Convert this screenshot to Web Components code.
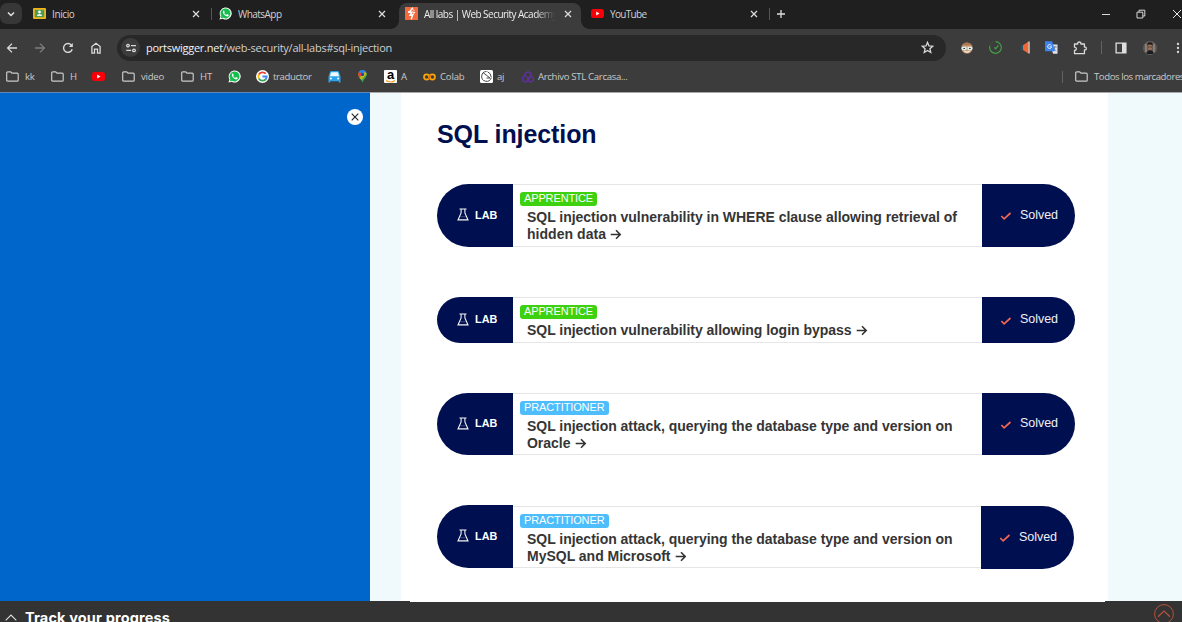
<!DOCTYPE html>
<html lang="es">
<head>
<meta charset="utf-8">
<title>All labs | Web Security Academy</title>
<style>
html,body{margin:0;height:100%;overflow:hidden;background:#fff;font-family:"Open Sans","Noto Sans",sans-serif}
</style>
</head>
<body>
<browser-window></browser-window>
<script>
const ICONS = {
 chevron:['0 0 12 12','<path d="M3 4.5l3 3 3-3" fill="none" stroke="#e4e4e4" stroke-width="1.5"/>'],
 close:['0 0 12 12','<path d="M3 3l6 6M9 3l-6 6" stroke="#dedede" stroke-width="1.2"/>'],
 plus:['0 0 12 12','<path d="M6 2v8M2 6h8" stroke="#dedede" stroke-width="1.3"/>'],
 classroom:['0 0 13 11','<rect width="13" height="11" rx="1" fill="#f0b51b"/><rect x="1.8" y="1.8" width="9.4" height="7.4" fill="#4d9a55"/><circle cx="6.5" cy="4" r="1.4" fill="#fff"/><path d="M3.8 8q0-2 2.700-2t2.700 2z" fill="#e8f4ea"/>'],
 whatsapp:['0 0 26 26','<path d="M1 25l1.8-6.500A12 12 0 1 1 7.400 23.300z" fill="#fff"/><path d="M3.400 22.600l1.200-4.400A10 10 0 1 1 8 21.500z" fill="#18bd4f"/><path d="M9.200 7.200c-1.500.8-2 2.500-1.200 4.500 1.300 3.200 3.700 5.700 7 6.900 2 .7 4 .2 4.500-2 .2-.8 0-1-.5-1.200l-2.400-1.100c-.5-.2-.8 0-1.100.4l-.9 1.100c-1.900-.6-3.400-2-4.300-3.700l1-1.400c.2-.4 0-.7-.1-1l-1-2.200c-.2-.4-.6-.4-1-.3z" fill="#fff"/>'],
 burp:['0 0 24 24','<path d="M0 0h24v24H0z" fill="#f26a3d"/><path d="M14.500 1.500L8 9.500h5L9.500 15H14l-2.500 7.500" fill="none" stroke="#fff" stroke-width="2.800"/><path d="M8 9.500L5.500 8M14 15l4-5h-3M14.500 5l3 2" fill="none" stroke="#fff" stroke-width="1.800"/>'],
 youtube:['0 0 13 9','<rect width="13" height="9" rx="2.300" fill="#f80008"/><path d="M5.200 2.600v3.800L8.500 4.500z" fill="#fff"/>'],
 back:['0 0 12 12','<path d="M11 6H1.700M6 1.600L1.600 6 6 10.400" fill="none" stroke="#dadada" stroke-width="1.300"/>'],
 forward:['0 0 12 12','<path d="M1 6h9.300M6 1.600L10.400 6 6 10.400" fill="none" stroke="#7e7e7e" stroke-width="1.300"/>'],
 reload:['0 0 12 12','<path d="M10.200 7.200A4.400 4.400 0 1 1 9.400 3.200" fill="none" stroke="#dadada" stroke-width="1.400"/><path d="M10.800.900v4H6.900z" fill="#dadada"/>'],
 home:['0 0 12 12','<path d="M1.900 4.500L6 1.300l4.100 3.200v6.600H7.500V7.200h-3v3.900H1.900z" fill="none" stroke="#dadada" stroke-width="1.300"/>'],
 tune:['0 0 12 12','<g fill="none" stroke="#d8d8d8" stroke-width="1.300"><circle cx="3" cy="3.600" r="1.300"/><path d="M6 3.600h5M1.200 8.400h5"/><circle cx="9" cy="8.400" r="1.300"/></g>'],
 star:['0 0 24 24','<path d="M12 2.500l2.700 6.500 7 .6-5.300 4.600 1.600 6.900-6-3.700-6 3.700 1.600-6.900L2.300 9.600l7-.6z" fill="none" stroke="#dadada" stroke-width="2.400"/>'],
 face:['0 0 12 12','<circle cx="6" cy="6" r="5.600" fill="#d2a27b"/><path d="M.8 5A5.300 5.300 0 0 1 11.200 5L9.500 3.500h-7z" fill="#a77752"/><rect x=".6" y="4.800" width="5" height="3.400" rx="1.400" fill="#d9eef0"/><rect x="6.400" y="4.800" width="5" height="3.400" rx="1.400" fill="#d9eef0"/><path d="M2.300 6.500h1.700M8 6.500h1.700" stroke="#344" stroke-width="1.100"/><path d="M3.500 9.500q2.500 1.500 5 0" stroke="#fff" fill="none"/>'],
 gauge:['0 0 13 13','<path d="M6.500.700A5.800 5.800 0 1 1 .9 5" fill="none" stroke="#43a047" stroke-width="1.200"/><path d="M1.200 4A6 6 0 0 1 4.500 1" fill="none" stroke="#37693a" stroke-dasharray="1.500 1"/><path d="M5.300 6.400l1.300 1.400 2.800-3.500" fill="none" stroke="#43a047" stroke-width="1.300"/>'],
 horn:['0 0 12 13','<path d="M1 4h3v5H1z" fill="#23536c"/><path d="M3 4.300L8.500.5v12L3 8.900z" fill="#f26835"/><path d="M9 .4v12.200" stroke="#f5d7ca" stroke-width="1.300"/>'],
 translate:['0 0 13 13','<path d="M5.500 3.500h7v9.300H8z" fill="#dfe3e9"/><path d="M7.800 6h4M9.800 5v1q0 2-2 4M8.300 7l3 3" stroke="#61789a" stroke-width=".8" fill="none"/><path d="M0 .3h7.200L10 10.200H0z" fill="#3d82ed"/><path d="M6.300 4.500a2 2 0 1 0 .3 1.400H4.500" fill="none" stroke="#fff" stroke-width=".9"/>'],
 puzzle:['0 0 14 14','<path d="M1.500 3h3.200q-.2-2 1.600-2t1.600 2h3.500v3q1.900-.1 1.900 1.500T11.400 9v3.700H1.500V9.500q1.900-.2 1.900-1.700T1.500 6.200z" fill="none" stroke="#dadada" stroke-width="1.300" stroke-linejoin="round"/>'],
 panel:['0 0 12 12','<path d="M1.100 1.100h9.800v9.800H1.100z" fill="none" stroke="#dedede" stroke-width="1.300"/><path d="M7 1h4v10H7z" fill="#dedede"/>'],
 avatar:['0 0 14 14','<circle cx="7" cy="7" r="7" fill="#615c58"/><path d="M3 3v8M11 3v8" stroke="#b4a697" stroke-width=".9"/><path d="M3.600 13l1-3 2.400-1 2.600 1 1 3z" fill="#191b1e"/><ellipse cx="7" cy="5.800" rx="2.300" ry="3.500" fill="#967058"/><path d="M4.500 5V2.500Q7 0 9.500 2.500V5L8.300 3.500H5.500z" fill="#19171a"/><path d="M5 6h1.500M7.500 6H9" stroke="#342823" stroke-width=".8"/>'],
 dots:['0 0 4 12','<g fill="#dedede"><circle cx="2" cy="2" r="1.150"/><circle cx="2" cy="6" r="1.150"/><circle cx="2" cy="10" r="1.150"/></g>'],
 folder:['0 0 13 11','<path d="M.7 9.200V1.800q0-1 1-1h3l1.300 1.400h5.200q1 0 1 1v6q0 1-1 1H1.700q-1 0-1-1z" fill="none" stroke="#c9c9c9" stroke-width="1.200"/>'],
 google:['0 0 26 26','<circle cx="13" cy="13" r="13" fill="#fff"/><g fill="none" stroke-width="3.600"><path d="M19.500 7.400A8.500 8.500 0 0 0 5.700 9" stroke="#ea4335"/><path d="M5.700 9a8.500 8.500 0 0 0 0 8" stroke="#fbbc05"/><path d="M5.700 17A8.500 8.500 0 0 0 19 19" stroke="#34a853"/><path d="M18.500 19.500A8.500 8.500 0 0 0 21.400 13H13" stroke="#4285f4"/></g>'],
 car:['0 0 13 12','<path d="M2.200.6Q2.400 0 3 0h7q.6 0 .8.600L12.500 5.500v6H10.800V10.300H2.200V11.500H.5v-6z" fill="#2aa3ee"/><path d="M3 1.200h7l1 4H2z" fill="#f2faff"/><circle cx="2.900" cy="7.600" r="1" fill="#fff"/><circle cx="10.100" cy="7.600" r="1" fill="#fff"/>'],
 maps:['0 0 9 13','<path d="M4.500 12.800C3.800 9.200.1 7.600.1 4.500A4.400 4.400 0 0 1 8.900 4.500c0 3.100-3.700 4.700-4.400 8.300z" fill="#34a853"/><path d="M.1 4.500Q.1 2.500 1.400 1.300L4.500 4.500 1.400 7.800Q.1 6 .1 4.500z" fill="#ea4335"/><path d="M1.300 1.400A4.400 4.400 0 0 1 8.400 2.500L4.500 4.500z" fill="#2f7de9"/><path d="M1.300 7.700L6.700 1.800 8.900 4 3.500 9.900z" fill="#fbbc04" opacity=".7"/><circle cx="4.500" cy="4.400" r="1.600" fill="#1c4b9c"/>'],
 colab:['0 0 13 8','<g fill="none" stroke="#f9a40a" stroke-width="1.700"><circle cx="3.600" cy="4" r="2.600"/><circle cx="9.400" cy="4" r="2.600"/></g><path d="M5.500 6L7.500 2" stroke="#e76b08" stroke-width="1.500"/>'],
 aj:['0 0 13 13','<rect width="13" height="13" rx="1.500" fill="#fff"/><path d="M6.500 1.500A4.900 4.900 0 1 0 11.200 8M3 2.500l7 5.500H6.500M7.500 1.700Q11 3 11.300 7.500" fill="none" stroke="#343434" stroke-width=".9"/>'],
 stl:['0 0 12 12','<g fill="none" stroke="#6230a6" stroke-width="1.300"><path d="M3 5.200V2.500L6 .8l3 1.700v3L6 7.200 4.500 6.300"/><path d="M4.800 5.500L2.500 4.700.7 6.500v3L3 11l3-1.500V7.200"/><path d="M8.800 5l2.500 1.500v3L9 11 6 9.500V8l2-1"/></g>'],
 flask:['0 0 12 13','<path d="M2.500 1h7M4.100 1v4L1 11.900h10L7.900 5V1" fill="none" stroke="#f5f5f5" stroke-width="1.100"/><path d="M3 8.700h6" stroke="#777f9e" stroke-width=".5"/>'],
 check:['0 0 12 10','<path d="M1.300 5l2.800 2.800L10.500 2" fill="none" stroke="#f16650" stroke-width="1.700"/>'],
 arrow:['0 0 12 11','<path d="M.7 5.500h9.300M6 1.300l4.200 4.200L6 9.700" fill="none" stroke="#333" stroke-width="1.600"/>'],
 shut:['0 0 16 16','<circle cx="8" cy="8" r="8" fill="#fff"/><path d="M4.700 4.700l6.600 6.600M11.300 4.700l-6.600 6.600" stroke="#222" stroke-width="1.100"/>'],
 up:['0 0 12 7','<path d="M.7 6.300L6 1l5.300 5.300" fill="none" stroke="#ddd" stroke-width="1.100"/>'],
 top:['0 0 20 20','<circle cx="10" cy="10" r="9.400" fill="none" stroke="#b8503e" stroke-width="1"/><path d="M4 12.800L10 7l6 5.800" fill="none" stroke="#b8503e" stroke-width="1.200"/>'],
 minimize:['0 0 10 10','<path d="M1 5.500h8" stroke="#d8d8d8" stroke-width="1"/>'],
 restore:['0 0 10 10','<path d="M1 3.200h5.800V9H1zM3 3V1.200h5.800V7H7" fill="none" stroke="#d8d8d8" stroke-width="1"/>'],
 exit:['0 0 10 10','<path d="M1 1l8 8M9 1l-8 8" stroke="#e8e8e8" stroke-width="1"/>']
};
function define(name, html, after){
 const t=document.createElement('template'); t.innerHTML=html;
 customElements.define(name, class extends HTMLElement{
  connectedCallback(){
   if(this.shadowRoot) return;
   this.attachShadow({mode:'open'}).append(t.content.cloneNode(true));
   if(after) after(this,this.shadowRoot);
  }
 });
}
define('ui-icon','<style>:host{display:block;flex:none;line-height:0}svg{display:block;width:100%;height:100%}</style>',(h,r)=>{
 const n=h.getAttribute('name'), i=ICONS[n], [, ,w,hh]=i[0].split(' ');
 h.style.width=(h.getAttribute('w')||w)+'px'; h.style.height=(h.getAttribute('h')||hh)+'px';
 r.append(document.createRange().createContextualFragment(`<svg viewBox="${i[0]}">${i[1]}</svg>`));
});
/* Tracks its text so that the line takes the width given in the "w" attribute. */
define('fit-text','<style>:host{display:inline-block;white-space:pre;flex:none}</style><slot></slot>',(h)=>{
 const w=+h.getAttribute('w'), n=h.textContent.length;
 requestAnimationFrame(()=>{const c=h.getBoundingClientRect().width; h.style.letterSpacing=((w-c)/n)+'px';});
});
define('browser-tab',`<style>
:host{display:flex;position:relative;box-sizing:border-box;width:186px;height:29px;align-items:center;padding:0 0 2px 6px;font-size:10px;color:#d2d2d2}
:host([active]) .bg{position:absolute;left:0;top:3px;width:182px;height:26px;background:#3c3c3c;border-radius:8px 8px 0 0}
:host([active]) .bg::before,:host([active]) .bg::after{content:"";position:absolute;bottom:0;width:8px;height:8px}
:host([active]) .bg::before{left:-8px;background:radial-gradient(circle at 0 0,#1f1f1f 7.500px,#3c3c3c 8px)}
:host([active]) .bg::after{right:-8px;background:radial-gradient(circle at 100% 0,#1f1f1f 7.500px,#3c3c3c 8px)}
:host([active]){color:#eee}
.ic{width:13px;display:flex;justify-content:center;z-index:1}
.t{z-index:1;width:132px;margin-left:6px;overflow:hidden;line-height:16px;height:16px}
:host([active]) .t{-webkit-mask-image:linear-gradient(90deg,#000 112px,transparent 131px)}
.x{z-index:1;margin-left:6px}
.s{width:1px;height:12px;background:#555;margin-left:8.500px}
:host([nosep]) .s{display:none}
</style><div class="bg"></div><div class="ic"><slot name="icon"></slot></div><div class="t"><slot></slot></div><ui-icon class="x" name="close"></ui-icon><div class="s"></div>`);
define('tab-strip',`<style>
:host{display:flex;height:29px;background:#1f1f1f;align-items:center}
.dd{width:22px;height:21px;background:#373737;border-radius:7px;display:grid;place-items:center;margin-top:-2px}
.tabs{display:flex;margin-left:5px}
.p{margin:0 314px 2px 4px}
.win{display:flex;gap:25px;align-items:center;padding-bottom:2px}
</style><div class="dd"><ui-icon name="chevron"></ui-icon></div>
<div class="tabs">
<browser-tab><ui-icon slot="icon" name="classroom"></ui-icon><fit-text w="22.500">Inicio</fit-text></browser-tab>
<browser-tab nosep><ui-icon slot="icon" name="whatsapp" w="13" h="13"></ui-icon><fit-text w="43.500">WhatsApp</fit-text></browser-tab>
<browser-tab active nosep><ui-icon slot="icon" name="burp" w="13" h="13"></ui-icon><fit-text w="133">All labs | Web Security Academy</fit-text></browser-tab>
<browser-tab><ui-icon slot="icon" name="youtube"></ui-icon><fit-text w="36.500">YouTube</fit-text></browser-tab>
</div><ui-icon class="p" name="plus"></ui-icon>
<div class="win"><ui-icon name="minimize"></ui-icon><ui-icon name="restore"></ui-icon><ui-icon name="exit" style="margin-left:1px"></ui-icon></div>`);
define('address-bar',`<style>
:host{display:flex;align-items:center;height:26px;border-radius:13px;background:#282828;font-size:11px;color:#cfcfcf}
.c{width:19px;height:19px;border-radius:50%;background:#3c3c3c;display:grid;place-items:center;margin:0 6px 0 4px}
b{font-weight:400;color:#f2f2f2}
.st{margin-left:auto;margin-right:12px}
</style><div class="c"><ui-icon name="tune"></ui-icon></div><fit-text w="246"><b>portswigger.net</b>/web-security/all-labs#sql-injection</fit-text><ui-icon class="st" name="star" w="13" h="13"></ui-icon>`);
define('nav-bar',`<style>
:host{display:grid;height:33px;padding-top:4px;box-sizing:border-box;background:#3c3c3c;align-items:center;justify-items:center;
grid-template-columns:24px 32px 24px 32px 5px 829px 7px 28px 28px 34px 16px 42px 1px 38px 20px 36px}
address-bar{justify-self:stretch}.s{width:1px;height:13px;background:#626262}
</style><ui-icon name="back"></ui-icon><ui-icon name="forward"></ui-icon><ui-icon name="reload"></ui-icon><ui-icon name="home"></ui-icon><i></i>
<address-bar></address-bar><i></i><ui-icon name="face"></ui-icon><ui-icon name="gauge"></ui-icon><ui-icon name="horn"></ui-icon><ui-icon name="translate"></ui-icon><ui-icon name="puzzle"></ui-icon><div class="s"></div><ui-icon name="panel"></ui-icon><ui-icon name="avatar"></ui-icon><ui-icon name="dots"></ui-icon>`);
define('book-mark',`<style>:host{display:flex;align-items:center;gap:4px}:host([f]){gap:6px}.i{width:13px;display:flex;justify-content:center}</style><div class="i"><slot name="icon"></slot></div><slot></slot>`);
define('amazon-mark',`<style>:host{display:block;width:13px;height:13px;background:#fff;border-radius:1px;color:#000;font:bold 13px/9px "Liberation Sans",sans-serif;text-align:center;overflow:hidden}svg{display:block;margin:1px auto 0}</style>a<svg width="10" height="3"><path d="M0 .500q5 3 9 0" fill="none" stroke="#f59a23" stroke-width="1.200"/></svg>`);
const fold='<ui-icon slot="icon" name="folder"></ui-icon>';
define('bookmarks-bar',`<style>
:host{display:grid;height:31px;padding-left:6px;padding-bottom:2px;box-sizing:border-box;background:#3c3c3c;align-items:center;font-size:9.600px;color:#c9c9c9;
grid-template-columns:45px 41px 30px 59px 47px 28px 72px 28px 28px 39px 57px 41px 541px 13px 120px}
.s{width:1px;height:12px;background:#626262}
</style>
<book-mark f>${fold}<fit-text w="9.500">kk</fit-text></book-mark>
<book-mark f>${fold}<fit-text w="7">H</fit-text></book-mark>
<book-mark><ui-icon slot="icon" name="youtube"></ui-icon></book-mark>
<book-mark f>${fold}<fit-text w="23">video</fit-text></book-mark>
<book-mark f>${fold}<fit-text w="12">HT</fit-text></book-mark>
<book-mark><ui-icon slot="icon" name="whatsapp" w="13" h="13"></ui-icon></book-mark>
<book-mark><ui-icon slot="icon" name="google" w="13" h="13"></ui-icon><fit-text w="38.500">traductor</fit-text></book-mark>
<book-mark><ui-icon slot="icon" name="car"></ui-icon></book-mark>
<book-mark><ui-icon slot="icon" name="maps"></ui-icon></book-mark>
<book-mark><amazon-mark slot="icon"></amazon-mark><fit-text w="6">A</fit-text></book-mark>
<book-mark><ui-icon slot="icon" name="colab"></ui-icon><fit-text w="24.500">Colab</fit-text></book-mark>
<book-mark><ui-icon slot="icon" name="aj"></ui-icon><fit-text w="7">aj</fit-text></book-mark>
<book-mark><ui-icon slot="icon" name="stl"></ui-icon><fit-text w="89.500">Archivo STL Carcasa...</fit-text></book-mark>
<div class="s"></div>
<book-mark f>${fold}<fit-text w="90">Todos los marcadores</fit-text></book-mark>`);
define('level-badge',`<style>
:host{display:block;width:max-content;height:13.500px;border-radius:3px;padding:0 4px;font-size:11px;line-height:13px;color:#fff;background:#3dd10f}
:host([blue]){background:#4dbdfb}
</style><slot></slot>`);
define('lab-card',`<style>
:host{display:grid;grid-template-columns:76px 1fr 93px;width:638px;font-family:"Liberation Sans",Arial,sans-serif}
.l,.r{background:#000f4f;color:#fff;display:flex;align-items:center}
.l{border-radius:99px 0 0 99px;padding-left:20px;font-weight:700;font-size:10.800px;gap:6px;padding-bottom:2px}
.r{border-radius:0 99px 99px 0;padding-left:18px;gap:8px;font-size:12.500px;color:#f0f0f5}
.r fit-text{margin-bottom:2px}.r ui-icon{margin-top:1px}
.m{border:1px solid #e6e6e6;border-width:1px 0;padding:7px 0 0 7px;min-width:0}
.t{margin:3px 0 0 7px;font-size:14px;line-height:17px;font-weight:700;color:#353535}
:host([last]){grid-template-columns:76px 1fr 93px 1px}
:host([last]) .m{margin-top:1px}
:host([last]) .r{margin:1px 0 -1px}
</style><div class="l"><ui-icon name="flask"></ui-icon><fit-text w="22.500">LAB</fit-text></div>
<div class="m"><slot name="badge"></slot><div class="t"><slot></slot></div></div>
<div class="r"><ui-icon name="check"></ui-icon><fit-text w="38">Solved</fit-text></div>`);
define('text-row','<style>:host{display:flex;gap:4px;height:17px;align-items:center;white-space:pre}</style><slot></slot>');
const app='<level-badge slot="badge"><fit-text w="69">APPRENTICE</fit-text></level-badge>', pra='<level-badge slot="badge" blue><fit-text w="80.500">PRACTITIONER</fit-text></level-badge>', arr='<ui-icon name="arrow"></ui-icon>';
define('lab-list',`<style>
:host{display:block;box-sizing:border-box;width:707px;height:509px;background:#fff;padding-left:36px}
h1{margin:0;padding-top:27px;height:64px;font:bold 25px/29px "Liberation Sans",Arial,sans-serif;color:#000f4f}
lab-card{margin-bottom:50px}
</style><h1><fit-text w="159.500">SQL injection</fit-text></h1>
<lab-card style="height:63px">${app}<text-row><fit-text w="430">SQL injection vulnerability in WHERE clause allowing retrieval of</fit-text></text-row><text-row><fit-text w="79">hidden data</fit-text>${arr}</text-row></lab-card>
<lab-card style="height:46px">${app}<text-row><fit-text w="324.500">SQL injection vulnerability allowing login bypass</fit-text>${arr}</text-row></lab-card>
<lab-card style="height:62px">${pra}<text-row><fit-text w="425.500">SQL injection attack, querying the database type and version on</fit-text></text-row><text-row><fit-text w="43.500">Oracle</fit-text>${arr}</text-row></lab-card>
<lab-card last style="height:63px;margin-bottom:0">${pra}<text-row><fit-text w="425.500">SQL injection attack, querying the database type and version on</fit-text></text-row><text-row><fit-text w="143.500">MySQL and Microsoft</fit-text>${arr}</text-row></lab-card>`);
define('side-panel',`<style>:host{display:flex;justify-content:flex-end;align-items:flex-start;box-sizing:border-box;width:370px;height:508px;background:#0066cb;padding:15.500px 7.500px 0 0}</style><ui-icon name="shut"></ui-icon>`);
define('progress-bar',`<style>
:host{display:flex;height:21px;background:#333;overflow:hidden;color:#fff;font:bold 14.500px/18px Inter,"Liberation Sans",sans-serif}
.a{margin:13px 8px 0 5px}fit-text{margin-top:8px}.b{margin:3px 8px 0 auto}
</style><ui-icon class="a" name="up"></ui-icon><fit-text w="145">Track your progress</fit-text><ui-icon class="b" name="top"></ui-icon>`);
define('browser-window',`<style>
:host{display:block;width:1182px;height:622px;overflow:hidden}
.page{display:grid;grid-template-columns:370px 31px 707px 74px;height:508px;background:#f0fafc;border-top:0}
.edge{display:flex;height:1px;margin-top:-1px;background:#a8a8a8}
.edge i{width:370px;background:#5d88b8}
.foot{position:relative}
.foot i{position:absolute;left:410px;top:0;width:695px;height:1px;background:#fff}
lab-list{height:508px}
</style><tab-strip></tab-strip><nav-bar></nav-bar><bookmarks-bar></bookmarks-bar><div class="edge"><i></i></div>
<div class="page"><side-panel></side-panel><div></div><lab-list></lab-list><div></div></div>
<div class="foot"><progress-bar></progress-bar><i></i></div>`);
</script>
</body>
</html>
